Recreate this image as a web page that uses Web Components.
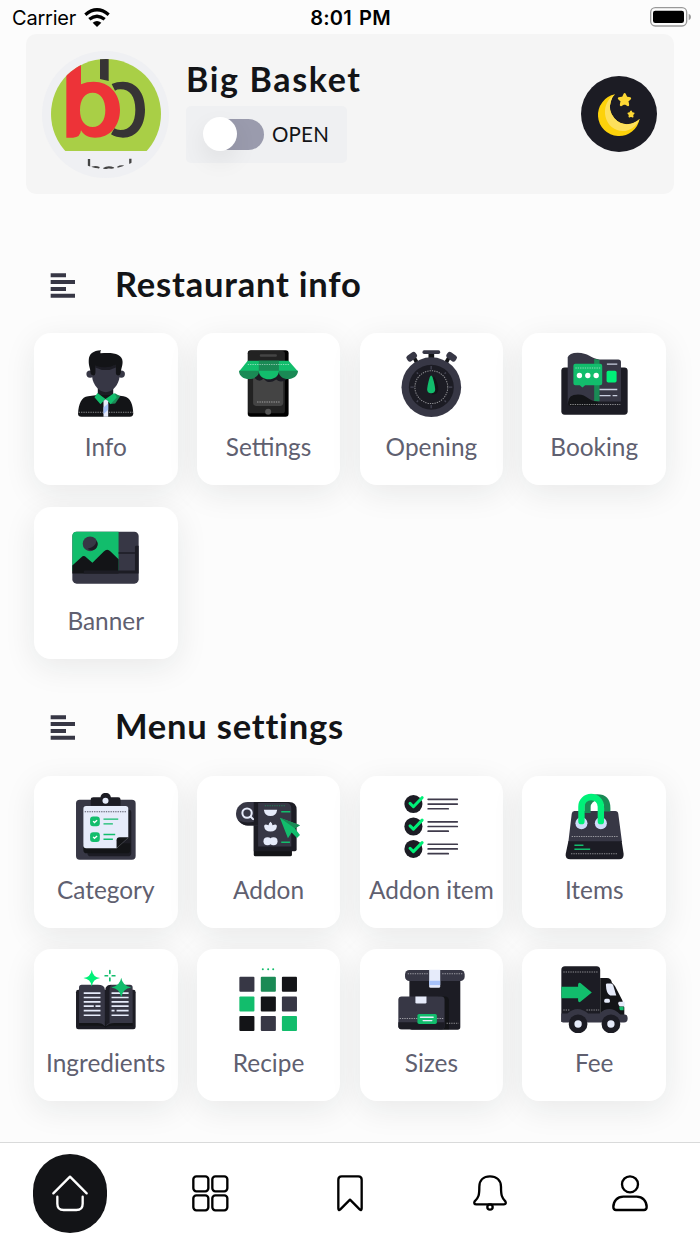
<!DOCTYPE html>
<html lang="en">
<head>
<meta charset="utf-8">
<title>Big Basket</title>
<style>
  body {
    margin: 0;
    background: #fcfcfc;
    font-family: Lato, 'Liberation Sans', sans-serif;
    color: #131417;
  }
</style>
</head>
<body>
<store-app>
  <status-bar slot="top" carrier="Carrier" time="8:01 PM"></status-bar>
  <store-header slot="top" name="Big Basket" state="OPEN"></store-header>

  <menu-section heading="Restaurant info">
    <menu-tile icon="info">Info</menu-tile>
    <menu-tile icon="settings">Settings</menu-tile>
    <menu-tile icon="opening">Opening</menu-tile>
    <menu-tile icon="booking">Booking</menu-tile>
    <menu-tile icon="banner">Banner</menu-tile>
  </menu-section>

  <menu-section heading="Menu settings">
    <menu-tile icon="category">Category</menu-tile>
    <menu-tile icon="addon">Addon</menu-tile>
    <menu-tile icon="addonItem">Addon item</menu-tile>
    <menu-tile icon="items">Items</menu-tile>
    <menu-tile icon="ingredients">Ingredients</menu-tile>
    <menu-tile icon="recipe">Recipe</menu-tile>
    <menu-tile icon="sizes">Sizes</menu-tile>
    <menu-tile icon="fee">Fee</menu-tile>
  </menu-section>

  <tab-bar slot="bottom">
    <tab-item icon="home" active></tab-item>
    <tab-item icon="grid"></tab-item>
    <tab-item icon="bookmark"></tab-item>
    <tab-item icon="bell"></tab-item>
    <tab-item icon="user"></tab-item>
  </tab-bar>
</store-app>

<script>
// Tile pictures, all on a 200x200 grid.
// Classes: a = slate, b = dark, k = near black, g = green, n = neon, f = forest, w = paper, s = stitching
const tileIcons = {
  info: `
    <path class="b" d="M77 110h46v36H77z"/>
    <circle class="a" cx="54" cy="72" r="11"/><circle class="a" cx="147" cy="72" r="11"/>
    <path class="a" d="M60 40h82v40c-2 24-22 46-41 46S62 104 60 80z"/>
    <path class="b" d="M70 44q31 10 61 0v8q-30 16-61 0z"/>
    <path class="k" d="M64 76c-6 0-9-4-9-10 0-11-6-18-5-36C51 12 62 2 87 1q-4 4-2 9c34-4 66 0 66 25 0 15-5 20-5 33q-2 8-8 8-7 0-7-8V44q-31 14-61 2v22q0 8-6 8z"/>
    <path class="k" d="M18 190c2-30 10-50 30-52l28-4h50l28 4c22 3 28 27 29 52q-1 9-10 9H28q-10 0-10-9z"/>
    <path class="f" d="M128 129l16 9-15 22-14 1z"/>
    <path class="g" d="M76 128l24 18-15 16-18-21zM126 128l-26 18 15 16 19-21z"/>
    <path class="w" d="M94 152l6-5 8 5v47H94z"/><path fill="#a6c1f8" d="M94 172l14-12v18l-14 14z"/>
    <path class="s" d="M20 186h72M110 186h72"/>`,
  settings: `
    <rect x="38" y="1" width="122" height="198" rx="9" fill="#000"/>
    <rect x="39" y="3" width="110" height="186" rx="8" fill="#222"/>
    <rect x="74" y="13" width="51" height="7" rx="3" fill="#444"/>
    <path fill="#444" d="M54 60h90v97q0 10-10 10H64q-10 0-10-10z"/>
    <circle cx="99" cy="184" r="9" fill="#555"/>
    <path class="b" d="M55 80q18 20 30 5 15 20 38 3 15 14 36-4V62H55z"/>
    <path class="g" d="M38 32h122l28 32H12z"/><path class="f" d="M71 32h60v32H71z"/>
    <path class="f" d="M12 62h60c0 32-60 34-60 0zM130 62h58c0 32-58 34-58 0z"/>
    <path class="g" d="M71 62h60c0 34-60 34-60 0z"/>
    <path class="s" d="M38 43h125M66 155h70"/>`,
  opening: `
    <path class="k" d="M91 8h17v18H91zM44 26l9-6 8 14-10 6zM156 26l-9-6-8 14 10 6z"/>
    <rect class="a" x="73" y="1" width="53" height="11" rx="5"/>
    <rect class="a" x="25" y="10" width="32" height="20" rx="7" transform="rotate(-36 41 20)"/>
    <rect class="a" x="144" y="10" width="32" height="20" rx="7" transform="rotate(36 160 20)"/>
    <circle class="a" cx="99.5" cy="111" r="89"/><circle class="b" cx="99.5" cy="111" r="67"/>
    <circle class="s" cx="99.5" cy="111" r="49"/>
    <path fill="none" stroke="#454554" stroke-width="4" d="M99 48v10M99 164v10M37 111h10M152 111h10M56 67l4 4M143 67l-4 4M56 155l4-4M143 155l-4-4"/>
    <path class="k" d="M106 78c10 8 16 36 14 44q-4 12-20 11z"/>
    <path class="g" d="M99 76c5 0 12 34 12 42q0 11-12 11t-12-11c0-8 7-42 12-42z"/>`,
  booking: `
    <rect class="b" x="1" y="52" width="198" height="141" rx="10"/>
    <rect class="a" x="90" y="28" width="89" height="142" rx="8"/>
    <path class="a" d="M20 160V22Q24 8 50 8c30 0 42 17 62 20v128z"/>
    <path class="f" d="M99 27l16 2v125H99z"/>
    <path class="b" d="M21 154h158v10q0 8-8 8H28z"/>
    <path class="k" d="M21 158q0-25 30-25c28 0 30 20 60 22l-6 12H30q-9 0-9-9z"/>
    <path class="g" d="M43 41h74q6 0 6 6v52q0 6-6 6H72l-8 7-8-7H43q-6 0-6-6V47q0-6 6-6z"/>
    <g fill="#fff"><circle cx="55" cy="76" r="8"/><circle cx="80" cy="76" r="8"/><circle cx="105" cy="76" r="8"/></g>
    <rect class="n" x="136" y="62" width="30" height="35" rx="5"/>
    <path stroke="#c9cfe0" stroke-width="4" d="M137 42h31M115 118h53M115 136h33M154 136h14"/>
    <path class="s" d="M43 54h76M27 163h150"/>`,
  banner: `
    <rect class="a" x="1" y="23" width="198" height="155" rx="13"/>
    <path class="g" d="M14 23h125v117H1V36q0-13 13-13z"/>
    <path class="k" d="M1 124l27-25q7-7 14 0l19 17 34-34q10-10 20 0l24 23v43H1z"/>
    <circle class="a" cx="54" cy="59" r="22"/><path class="b" d="M73 50q-2 18-26 24c20 14 38-10 26-24z"/>
    <path class="b" d="M35 148v-5q0-4 4-4h149V69q0-4 4-4h7v83zM139 84h49v5h-49z"/>`,
  category: `
    <rect class="a" x="12" y="20" width="178" height="179" rx="11"/>
    <path class="b" d="M46 50h124q7 0 7 7v122q0 10-10 10H56q-10 0-10-10z"/>
    <path class="k" d="M34 150h140v20q0 10-10 10H44q-10 0-10-10z"/>
    <path class="w" d="M42 39h118q8 0 8 8v86l-34 32H42q-8 0-8-8V47q0-8 8-8z"/>
    <path class="k" d="M133 166v-25q0-9 9-9h27z"/>
    <path class="b" d="M56 38V20q0-7 8-7h21c1-18 30-18 31 0h22q7 0 7 7v18z"/>
    <circle class="w" cx="100" cy="23" r="9"/>
    <rect class="g" x="54" y="70" width="29" height="29" rx="9"/><rect class="g" x="54" y="117" width="29" height="29" rx="9"/>
    <path fill="none" stroke="#fff" stroke-width="4" d="M63 84l4 4 8-7M63 131l4 4 8-7"/>
    <path stroke="#12bd6c" stroke-width="4" d="M94 78h44M94 92h28M94 124h35M94 138h28"/>
    <path class="s" style="stroke:#555566;opacity:1" d="M38 56h126"/>`,
  addon: `
    <path class="k" d="M56 60h114v124q0 5-5 5H61q-5 0-5-5z"/>
    <path class="b" d="M56 27h105q23 0 23 24v118q0 5-5 5H56z"/>
    <path class="a" d="M38 27h30v70H38a35 35 0 0 1 0-70z"/>
    <path class="b" d="M56 27h13v70H38q-16 0-26-14 20 8 44 3z"/>
    <path class="a" d="M69 30h84q15 0 15 17v113H69z"/>
    <circle cx="36" cy="60" r="14" fill="none" stroke="#e6ebfa" stroke-width="6"/>
    <path stroke="#e6ebfa" stroke-width="6" stroke-linecap="round" d="M47 71l7 7"/>
    <path class="w" d="M86 50h40q-3 19-20 19T86 50zM106 86q5 4 6 10 14-5 13 4-2 15-19 15t-19-15q-1-9 13-4 1-6 6-10z"/>
    <circle class="w" cx="97" cy="144" r="12"/><circle class="w" cx="115" cy="144" r="12"/>
    <path stroke="#12bd6c" stroke-width="4" d="M138 56h27M138 147h26"/>
    <path class="s" style="stroke:#12bd6c" d="M89 38h60"/>
    <path class="g" d="M134 74l60 22-15 10 15 19-9 9-16-16-11 17z"/><path class="f" d="M134 74l60 22-15 10z"/>`,
  addonItem: [33, 100, 167].map(y => `
    <circle class="b" cx="46" cy="${y}" r="27"/>
    <path fill="none" stroke="#00f078" stroke-width="9" stroke-linecap="round" stroke-linejoin="round" d="M36 ${y - 2}l10 10 26-27"/>
    <path stroke="#3f3b4b" stroke-width="5" stroke-linecap="round" d="M90 ${y - 14}h87M90 ${y}h87M90 ${y + 14}h60"/>`).join(''),
  items: `
    <path class="a" d="M40 54h122q8 0 9 8l11 84H22l10-84q1-8 8-8z"/>
    <path class="b" d="M22 144h159l6 38q1 16-13 16H28q-16 0-14-16z"/>
    <circle cx="61" cy="90" r="18" fill="#cfdcf9"/><circle cx="119" cy="90" r="18" fill="#cfdcf9"/>
    <path fill="none" stroke="#1a8a55" stroke-width="19" d="M79 60V42a29 29 0 0 1 29-29q30 0 30 32v10"/>
    <path fill="none" stroke="#00f078" stroke-width="19" stroke-linecap="round" d="M61 84V41a29 29 0 0 1 58 0v43"/>
    <path stroke="#12bd6c" stroke-width="5" d="M40 156h27M40 168h47"/>
    <path class="s" d="M32 130h138M30 181h138"/>`,
  ingredients: `
    <rect class="b" x="12" y="71" width="178" height="118" rx="7"/>
    <path class="k" d="M21 166h160v12h-62q-14 0-18 6-6-6-20-6H21z"/>
    <path class="a" d="M21 170V64q0-8 8-8h48q21 0 21 14v110q-6-10-22-10z"/>
    <path class="a" d="M102 180V70q0-14 20-14h51q8 0 8 8v106h-54q-18 0-25 10z"/>
    <path class="b" d="M100 66q4-10 18-10-6 6-6 14v100q-8 2-12 12z"/>
    <path stroke="#e6ebfa" stroke-width="5" d="M35 81h50M35 94h50M35 107h50M35 120h30M70 120h15M35 133h50M35 147h50M118 81h51M118 94h51M118 107h51M118 120h51M118 133h9M133 133h36M118 147h51"/>
    <path class="n" d="M59 11q3 22 25 25-22 3-25 25-3-22-25-25 22-3 25-25z"/>
    <path class="g" d="M147 35q4 25 30 29-26 4-30 29-4-25-30-29 26-4 30-29z"/>
    <path stroke="#12bd6c" stroke-width="5" stroke-linecap="round" d="M113 14v8M113 36v8M99 29h7M120 29h8"/>`,
  recipe: `
    <g class="a"><rect x="13" y="32" width="45" height="45" rx="3"/><rect x="140" y="91" width="45" height="45" rx="3"/><rect x="77" y="149" width="45" height="45" rx="3"/></g>
    <g class="k"><rect x="140" y="32" width="45" height="45" rx="3"/><rect x="77" y="91" width="45" height="45" rx="3"/><rect x="13" y="149" width="45" height="45" rx="3"/></g>
    <g class="g"><rect x="13" y="91" width="45" height="45" rx="3"/><rect x="140" y="149" width="45" height="45" rx="3"/></g>
    <rect class="f" x="77" y="32" width="45" height="45" rx="3"/>
    <g class="g"><circle cx="83" cy="10" r="3"/><circle cx="99" cy="10" r="3"/><circle cx="114" cy="10" r="3"/></g>`,
  sizes: `
    <path class="b" d="M34 36h152v146q0 8-8 8H42q-8 0-8-8z"/>
    <rect class="a" x="21" y="12" width="178" height="33" rx="13"/>
    <path class="w" d="M93 11h33v50q0 4-4 4H97q-4 0-4-4z"/><path fill="#a6c1f8" d="M93 44h33v13H93z"/>
    <path class="k" d="M120 91h20q12 0 12 12v86h-32z"/>
    <rect class="a" x="1" y="91" width="138" height="98" rx="10"/>
    <path class="b" d="M1 168h138v12q0 9-10 9H11q-10 0-10-9z"/>
    <path class="w" d="M52 91h33v17q0 4-4 4H56q-4 0-4-4z"/>
    <path class="s" d="M29 23h62M132 23h60M5 157h130M145 171h36"/>
    <rect class="g" x="58" y="143" width="58" height="30" rx="5"/>
    <path stroke="#e6ebfa" stroke-width="4" stroke-linecap="round" d="M67 153h38M75 163h26"/>`,
  fee: `
    <path class="b" d="M12 1h94q11 0 11 11v155H1V12Q1 1 12 1z"/>
    <path class="k" d="M117 36h20q13 0 15 14l9 10 22 42 6 22v24h-72z"/>
    <path class="w" d="M138 52h11q5 0 7 6l9 30h-18q-12-4-13-32 0-4 4-4z"/>
    <rect class="w" x="129" y="98" width="17" height="12" rx="5"/>
    <path class="w" d="M174 107h16v14h-11q-7 0-8-10 0-4 3-4z"/><path class="g" d="M174 122h13v10h-9q-4 0-4-10z"/>
    <path class="a" d="M1 142h18q30-27 62 0h34q30-28 62 3h13q9 0 9 12t-11 12H9q-8 0-8-8z"/>
    <circle class="b" cx="51" cy="173" r="28"/><circle class="b" cx="149" cy="173" r="28"/>
    <circle class="w" cx="51" cy="173" r="11"/><circle class="w" cx="149" cy="173" r="11"/>
    <path class="g" d="M1 62h50v-7q1-7 7-4l34 28-34 28q-6 3-7-4v-7H1z"/>
    <path class="s" d="M7 18h104M7 131h20M76 131h38"/>`
};

// Tab icons on a 108x108 grid, outlines only.
const tabIcons = {
  home: '<path d="M4 55L54 5l50 50M16 65v21q0 19 19 19h38q19 0 19-19V65"/>',
  grid: '<rect x="4" y="4" width="45" height="45" rx="9"/><rect x="61" y="4" width="45" height="45" rx="9"/><rect x="4" y="61" width="45" height="45" rx="9"/><rect x="61" y="61" width="45" height="45" rx="9"/>',
  bookmark: '<path d="M19 14q0-10 10-10h50q10 0 10 10v86q0 8-6 3L54 74l-29 29q-6 5-6-3z"/>',
  bell: '<path d="M22 35C22 15 35 4 54 4s33 11 33 31c0 25 2 33 13 44q4 9-4 9H13q-9 0-5-9c12-11 14-19 14-44z"/><circle cx="54" cy="96" r="8"/>',
  user: '<circle cx="54" cy="28" r="24"/><path d="M4 96c0-18 12-31 30-31h40c18 0 30 13 30 31q0 9-8 9H12q-8 0-8-9z"/>'
};

class StoreApp extends HTMLElement {
  constructor() {
    super();
    this.attachShadow({ mode: 'open' });
    this.shadowRoot.innerHTML = `
      <style>
        :host { display: flex; flex-direction: column; height: 1244px; overflow: hidden; }
        main { flex: 1; min-height: 0; overflow: hidden; display: flex; flex-direction: column; gap: 26px; padding-top: 48px; }
      </style>
      <slot name="top"></slot>
      <main><slot></slot></main>
      <slot name="bottom"></slot>
    `;
  }
}

class StatusBar extends HTMLElement {
  constructor() {
    super();
    this.attachShadow({ mode: 'open' });
    this.shadowRoot.innerHTML = `
      <style>
        :host {
          display: grid;
          grid-template-columns: 1fr auto 1fr;
          align-items: center;
          height: 34px;
          padding: 0 9px 0 12px;
          box-sizing: border-box;
          font: 400 20px/1 Inter, 'Liberation Sans', sans-serif;
          color: #000;
        }
        .left { display: flex; align-items: center; gap: 8px; }
        .carrier { letter-spacing: -0.2px; padding-top: 2px; }
        .time { font-weight: 600; letter-spacing: 0.2px; word-spacing: 2px; padding: 2px 2px 0 0; }
        .battery { justify-self: end; }
        svg { display: block; }
      </style>
      <div class="left">
        <span class="carrier"></span>
        <svg width="26" height="19" viewBox="0 0 78 57">
          <g fill="none" stroke="#000" stroke-width="10">
            <path d="M4 20Q39-9 74 20"/>
            <path d="M16 34q23-19 46 0"/>
          </g>
          <path d="M39 57L26 44q13-10 26 0z"/>
        </svg>
      </div>
      <span class="time"></span>
      <svg class="battery" width="41" height="20" viewBox="0 0 123 60">
        <rect x="2" y="2" width="108" height="55" rx="14" fill="none" stroke="#999" stroke-width="4"/>
        <rect x="9" y="11" width="93" height="37" rx="7"/>
        <path fill="#999" d="M116 20q7 3 7 10t-7 10z"/>
      </svg>
    `;
    this.shadowRoot.querySelector('.carrier').textContent = this.getAttribute('carrier');
    this.shadowRoot.querySelector('.time').textContent = this.getAttribute('time');
  }
}

class StoreHeader extends HTMLElement {
  constructor() {
    super();
    this.attachShadow({ mode: 'open' });
    this.shadowRoot.innerHTML = `
      <style>
        :host {
          display: flex;
          align-items: center;
          height: 160px;
          margin: 0 26px;
          padding: 0 17px 0 16px;
          box-sizing: border-box;
          background: #f5f5f5;
          border-radius: 10px;
        }
        .avatar {
          width: 127px;
          height: 127px;
          border-radius: 50%;
          background: #eff0f3;
          display: grid;
          place-items: center;
        }
        .details { flex: 1; margin-left: 17px; padding-bottom: 8px; }
        h1 { margin: 0 0 6px; font-size: 34px; line-height: 42px; font-weight: 700; letter-spacing: 1.65px; }
        .state {
          display: flex;
          align-items: center;
          gap: 8px;
          height: 57px;
          width: 161px;
          padding-left: 18px;
          box-sizing: border-box;
          border-radius: 5px;
          background: #eff0f2;
          font-size: 20.5px;
          letter-spacing: 0.2px;
        }
        .track { width: 60px; height: 31px; border-radius: 16px; background: #9a9bad; display: flex; align-items: center; }
        .thumb { flex: none; width: 34px; height: 34px; margin-left: -1px; border-radius: 50%; background: #fff; box-shadow: 0 10px 24px rgba(0, 0, 0, .07); }
        .theme { flex: none; width: 76px; height: 76px; padding: 0; border: 0; border-radius: 50%; background: #1c1c24; }
        svg { display: block; }
      </style>
      <div class="avatar">
        <svg width="110" height="110" viewBox="0 0 330 330">
          <clipPath id="round"><circle cx="165" cy="165" r="165"/></clipPath>
          <g clip-path="url(#round)">
            <path fill="#a9cf46" d="M0 0h330v276H0z"/>
            <path fill="#373435" d="M147 0h26v66l-26-6z"/>
            <path fill="#373435" fill-rule="evenodd" d="M216 68c40 0 66 34 66 84s-26 84-66 84q-20 0-36-10l10-18q8 5 18 5c29 0 45-22 45-61s-16-61-45-61q-10 0-16 4l-10-20q15-7 34-7z"/>
            <path fill="#ed3338" fill-rule="evenodd" d="M46 0h44v76c12-6 24-8 38-8 46 0 79 35 79 84s-31 84-75 84c-18 0-32-5-42-22q-2 22-24 22H46zM125 101c-24 0-38 21-38 52s14 51 38 51 38-20 38-51-14-52-38-52z"/>
            <g fill="none" stroke="#444" stroke-width="7"><path d="M114 300v30M117 330q12-9 28-3M158 330q14-9 30-1M200 326q9-5 18-3M238 299v16"/></g>
          </g>
        </svg>
      </div>
      <div class="details">
        <h1></h1>
        <div class="state">
          <div class="track"><div class="thumb"></div></div>
          <span></span>
        </div>
      </div>
      <button class="theme">
        <svg width="76" height="76" viewBox="0 0 228 228">
          <path fill="#fdd20a" d="M102 55a63 63 0 1 0 74 73q-8 9-26 15A52 52 0 0 1 90 75q4-14 12-20z"/>
          <path fill="#fde05c" d="M102 55C66 76 62 126 92 153c28 22 68 14 84-25q-8 9-26 15A52 52 0 0 1 90 75q4-14 12-20z"/>
          <g fill="#fdd835" stroke="#fdd835" stroke-width="7" stroke-linejoin="round">
            <path d="M131 55l5 10 11 2-8 8 2 12-10-6-11 6 2-12-8-8 12-2z"/>
            <path stroke-width="5" d="M150 106l3 5 5 1-4 4 1 6-5-3-5 3 1-6-4-4 5-1z"/>
          </g>
        </svg>
      </button>
    `;
    this.shadowRoot.querySelector('h1').textContent = this.getAttribute('name');
    this.shadowRoot.querySelector('.state span').textContent = this.getAttribute('state');
  }
}

class MenuSection extends HTMLElement {
  constructor() {
    super();
    this.attachShadow({ mode: 'open' });
    this.shadowRoot.innerHTML = `
      <style>
        :host { display: block; }
        header { display: flex; align-items: center; gap: 40px; height: 91px; padding: 0 0 5px 50px; box-sizing: border-box; }
        h2 { margin: 0; font-size: 34.5px; line-height: 42px; font-weight: 700; letter-spacing: 0.8px; padding-bottom: 3px; }
        .tiles {
          display: grid;
          grid-template-columns: repeat(4, 1fr);
          gap: 21.5px 19.3px;
          padding: 0 34px;
        }
        svg { display: block; }
      </style>
      <header>
        <svg width="25" height="25" viewBox="0 0 75 75">
          <path stroke="#373745" stroke-width="12" stroke-linejoin="round" d="M2 7h46M2 27h73M2 48h46M2 68h73"/>
        </svg>
        <h2></h2>
      </header>
      <div class="tiles"><slot></slot></div>
    `;
    this.shadowRoot.querySelector('h2').textContent = this.getAttribute('heading');
  }
}

class MenuTile extends HTMLElement {
  constructor() {
    super();
    this.attachShadow({ mode: 'open' });
    this.shadowRoot.innerHTML = `
      <style>
        :host {
          display: flex;
          flex-direction: column;
          align-items: center;
          height: 152px;
          padding-top: 17px;
          box-sizing: border-box;
          border-radius: 17px;
          background: #fff;
          box-shadow: 0 8px 32px rgba(20, 35, 30, .085);
          color: #5f6070;
          font-size: 24.4px;
          line-height: 30px;
          white-space: nowrap;
        }
        svg { display: block; width: 67px; height: 67px; margin-bottom: 15px; flex: none; }
        .a { fill: #373745; }
        .b { fill: #1c1c24; }
        .k { fill: #131417; }
        .g { fill: #12bd6c; }
        .n { fill: #00f078; }
        .f { fill: #1a8a55; }
        .w { fill: #e6ebfa; }
        .s { fill: none; stroke: #fff; stroke-width: 3; stroke-dasharray: 4 3; opacity: .5; }
      </style>
      <svg viewBox="0 0 200 200">${tileIcons[this.getAttribute('icon')]}</svg>
      <span><slot></slot></span>
    `;
  }
}

class TabBar extends HTMLElement {
  constructor() {
    super();
    this.attachShadow({ mode: 'open' });
    this.shadowRoot.innerHTML = `
      <style>
        :host {
          display: flex;
          height: 102px;
          box-sizing: border-box;
          border-top: 1px solid #d9dada;
          background: #fff;
        }
      </style>
      <slot></slot>
    `;
  }
}

class TabItem extends HTMLElement {
  constructor() {
    super();
    this.attachShadow({ mode: 'open' });
    this.shadowRoot.innerHTML = `
      <style>
        :host { flex: 1; display: grid; place-items: center; color: #000; }
        div { width: 74px; height: 79px; border-radius: 37px; display: grid; place-items: center; padding-bottom: 2px; box-sizing: border-box; }
        :host([active]) div { background: #131417; color: #fff; }
        svg { width: 36px; height: 36px; overflow: visible; fill: none; stroke: currentColor; stroke-width: 7; stroke-linecap: round; stroke-linejoin: round; }
      </style>
      <div><svg viewBox="0 0 108 108">${tabIcons[this.getAttribute('icon')]}</svg></div>
    `;
  }
}

window.customElements.define('store-app', StoreApp);
window.customElements.define('status-bar', StatusBar);
window.customElements.define('store-header', StoreHeader);
window.customElements.define('menu-section', MenuSection);
window.customElements.define('menu-tile', MenuTile);
window.customElements.define('tab-bar', TabBar);
window.customElements.define('tab-item', TabItem);
</script>
</body>
</html>
